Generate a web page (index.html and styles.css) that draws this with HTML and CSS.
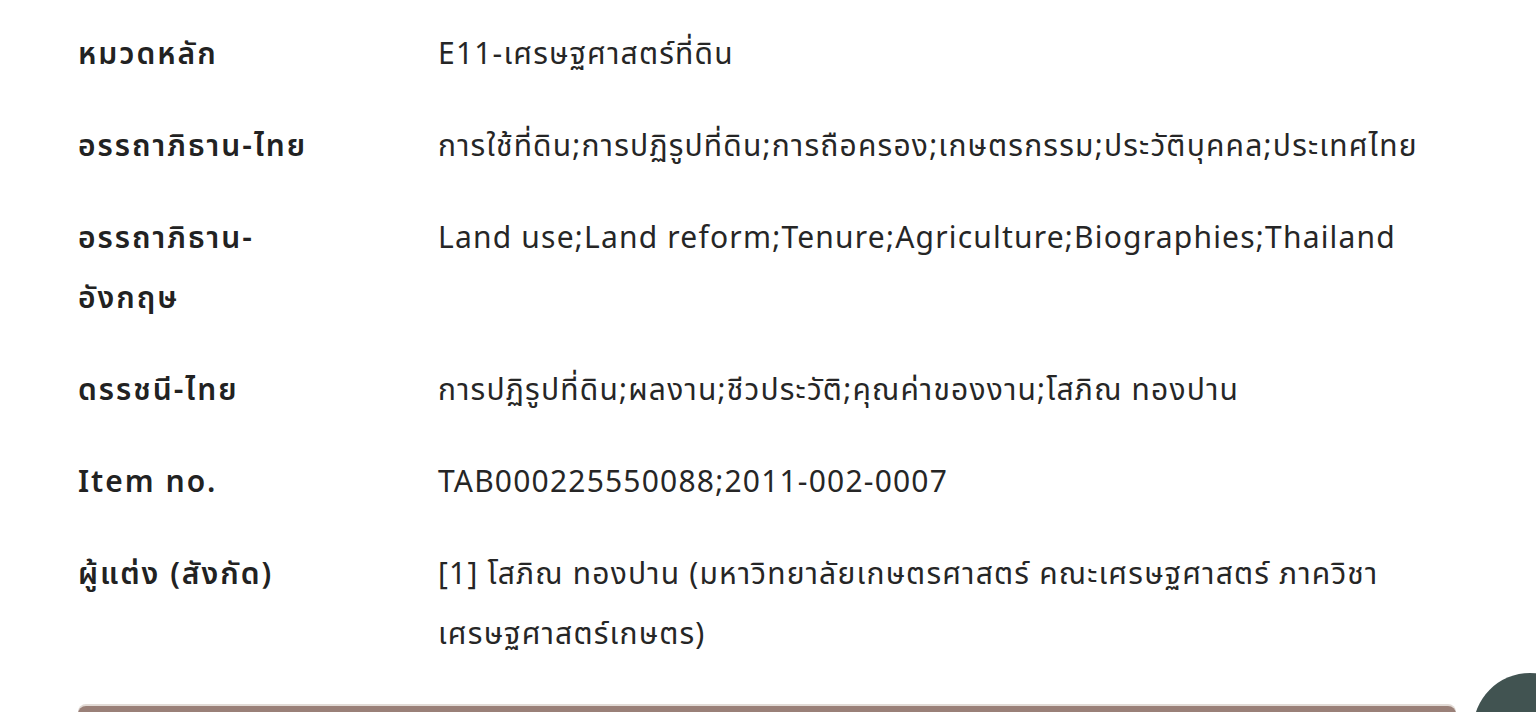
FILE: index.html
```html
<!DOCTYPE html>
<html lang="th">
<head>
<meta charset="utf-8">
<link rel="stylesheet" href="styles.css">
</head>
<body>
<main class="page">
  <dl class="meta">
    <div class="row"><dt>หมวดหลัก</dt><dd>E11-เศรษฐศาสตร์ที่ดิน</dd></div>
    <div class="row"><dt>อรรถาภิธาน-ไทย</dt><dd>การใช้ที่ดิน;การปฏิรูปที่ดิน;การถือครอง;เกษตรกรรม;ประวัติบุคคล;ประเทศไทย</dd></div>
    <div class="row"><dt>อรรถาภิธาน-อังกฤษ</dt><dd>Land use;Land reform;Tenure;Agriculture;Biographies;Thailand</dd></div>
    <div class="row"><dt>ดรรชนี-ไทย</dt><dd>การปฏิรูปที่ดิน;ผลงาน;ชีวประวัติ;คุณค่าของงาน;โสภิณ ทองปาน</dd></div>
    <div class="row"><dt>Item no.</dt><dd>TAB000225550088;2011-002-0007</dd></div>
    <div class="row"><dt>ผู้แต่ง (สังกัด)</dt><dd>[1] โสภิณ ทองปาน (มหาวิทยาลัยเกษตรศาสตร์ คณะเศรษฐศาสตร์ ภาควิชา เศรษฐศาสตร์เกษตร)</dd></div>
  </dl>
  <div class="bar"></div>
</main>
<button class="to-top" aria-label="top"></button>
</body>
</html>
```

FILE: styles.css
```css
html, body {
  margin: 0;
  padding: 0;
  background: #ffffff;
  overflow: hidden;
}
body {
  font-family: "Noto Sans Thai", "Noto Sans", "Liberation Sans", sans-serif;
  color: #222222;
}
.page {
  padding: 25px 80px 0 78px;
}
.meta {
  margin: 0;
  display: flex;
  flex-direction: column;
  gap: 32px;
}
.row {
  display: flex;
  align-items: flex-start;
}
.row dt {
  flex: 0 0 250px;
  margin-right: 110px;
  font-size: 30px;
  line-height: 60px;
  letter-spacing: 2px;
  font-weight: 600;
  color: #222222;
}
.row dd {
  flex: 1;
  margin: 0;
  font-size: 30px;
  line-height: 60px;
  letter-spacing: 1.2px;
  font-weight: 400;
  color: #262626;
}
.bar {
  margin-top: 41px;
  height: 40px;
  background: #9a8078;
  border-radius: 8px 8px 0 0;
  box-shadow: 0 -2px 0 #e2dbd6;
}
.to-top {
  position: fixed;
  left: 1473px;
  top: 673px;
  width: 114px;
  height: 114px;
  border-radius: 50%;
  border: none;
  background: #415351;
  padding: 0;
}
```
